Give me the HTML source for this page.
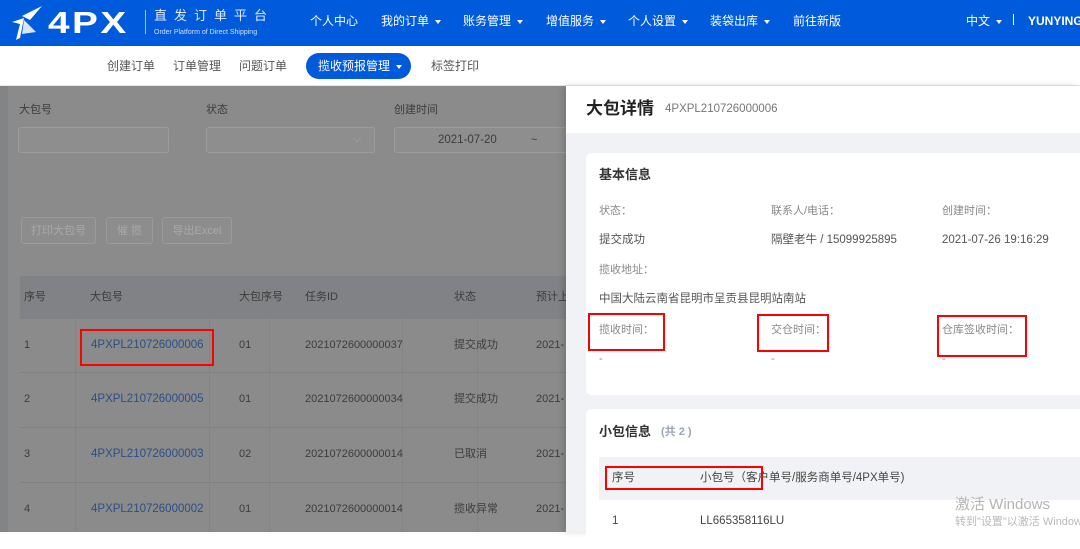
<!DOCTYPE html>
<html><head><meta charset="utf-8"><style>
*{margin:0;padding:0;box-sizing:border-box}
body{width:1080px;height:532px;overflow:hidden;position:relative;font-family:"Liberation Sans","Noto Sans CJK SC",sans-serif;background:#fff;font-size:12px}
.a{position:absolute;white-space:nowrap;line-height:15px}
#top{position:absolute;left:0;top:0;width:1080px;height:46px;background:#005adc;color:#fff}
#top .n{position:absolute;top:14px;font-size:12px;color:#fff;line-height:15px}
.car{display:inline-block;width:0;height:0;border-left:3px solid transparent;border-right:3px solid transparent;border-top:4px solid #fff;vertical-align:middle;margin-left:6px}
#sub{position:absolute;left:0;top:46px;width:1080px;height:40px;background:#fff;border-bottom:1px solid #dde8f5}
#sub .s{position:absolute;top:13px;color:#555;font-size:12px;line-height:15px}
#left{position:absolute;left:0;top:86px;width:566px;height:446px;background:#8b8b8b}
.lt{color:#3c3c3c;font-size:11px}
.inp{position:absolute;border:1px solid #9c9c9c;border-radius:3px;background:#8e8e8e}
.btn{position:absolute;border:1px solid #9a9a9a;border-radius:3px;color:#a9a9a9;font-size:11px;text-align:center;line-height:26px;background:#8d8d8d}
.red{position:absolute;border:2px solid #f00}
#drawer{position:absolute;left:566px;top:86px;width:514px;height:446px;background:#f0f2f5;box-shadow:-3px 0 6px rgba(0,0,0,.15)}
.card{position:absolute;background:#fff;border-radius:6px}
.g{color:#888;font-size:11px}
.v{color:#555;font-size:11.5px}
</style></head><body>
<div id="top">
 <svg class="a" style="left:8px;top:4px" width="36" height="38" viewBox="0 0 36 38"><path d="M4 18 L16 14 L12 34 L8 36 L12 20 Z" fill="#fff"/><path d="M14 12 L34 2 L22 16 Z" fill="#fff"/><path d="M16 16 L28 28 L14 30 Z" fill="#fff" opacity=".85"/></svg>
 <div class="a" style="left:48px;top:7px;font-size:31px;line-height:32px;font-weight:bold;letter-spacing:2px;color:#fff;transform:scaleX(1.25);transform-origin:left">4PX</div>
 <div class="a" style="left:145px;top:10px;width:1px;height:24px;background:#9fc1f2"></div>
 <div class="a" style="left:154px;top:8px;font-size:13px;letter-spacing:7px;color:#dfe9fb">直发订单平台</div>
 <div class="a" style="left:154px;top:25px;font-size:7px;color:#cfe0fa">Order Platform of Direct Shipping</div>
 <div class="n" style="left:310px">个人中心</div>
 <div class="n" style="left:381px">我的订单<span class="car"></span></div>
 <div class="n" style="left:463px">账务管理<span class="car"></span></div>
 <div class="n" style="left:546px">增值服务<span class="car"></span></div>
 <div class="n" style="left:628px">个人设置<span class="car"></span></div>
 <div class="n" style="left:710px">装袋出库<span class="car"></span></div>
 <div class="n" style="left:793px">前往新版</div>
 <div class="n" style="left:966px">中文<span class="car"></span></div>
 <div class="a" style="left:1013px;top:14px;width:1px;height:11px;background:#fff"></div>
 <div class="n" style="left:1028px;font-weight:bold">YUNYING</div>
</div>
<div id="sub">
 <div class="s" style="left:107px">创建订单</div>
 <div class="s" style="left:173px">订单管理</div>
 <div class="s" style="left:239px">问题订单</div>
 <div class="a" style="left:306px;top:7px;width:105px;height:26px;border-radius:13px;background:#005adc;color:#fff;line-height:26px;padding-left:12px;font-size:12px">揽收预报管理<span class="car"></span></div>
 <div class="s" style="left:431px">标签打印</div>
</div>
<div id="left">
 <div class="a" style="left:0;top:0;width:8px;height:446px;background:#838486"></div>
 <div class="a lt" style="left:19px;top:17px">大包号</div>
 <div class="a lt" style="left:206px;top:17px">状态</div>
 <div class="a lt" style="left:394px;top:17px">创建时间</div>
 <div class="inp" style="left:18px;top:41px;width:151px;height:26px"></div>
 <div class="inp" style="left:206px;top:41px;width:169px;height:26px"><span class="a" style="left:146px;top:4px;color:#a8a8a8;font-size:11px">⌵</span></div>
 <div class="inp" style="left:394px;top:41px;width:180px;height:26px"><span class="a lt" style="left:43px;top:5px;font-size:11.5px">2021-07-20</span><span class="a lt" style="left:136px;top:5px">~</span></div>
 <div class="btn" style="left:21px;top:131px;width:75px;height:27px">打印大包号</div>
 <div class="btn" style="left:106px;top:131px;width:47px;height:27px">催 揽</div>
 <div class="btn" style="left:162px;top:131px;width:70px;height:27px">导出Excel</div>
 <div class="a" style="left:20px;top:190px;width:546px;height:43px;background:#818285"></div>
 <div class="a lt" style="left:24px;top:204px">序号</div>
 <div class="a lt" style="left:90px;top:204px">大包号</div>
 <div class="a lt" style="left:239px;top:204px">大包序号</div>
 <div class="a lt" style="left:305px;top:204px">任务ID</div>
 <div class="a lt" style="left:454px;top:204px">状态</div>
 <div class="a lt" style="left:536px;top:204px">预计上</div>
 <div class="a" style="left:20px;top:286px;width:546px;height:1px;background:#808080"></div>
 <div class="a" style="left:20px;top:341px;width:546px;height:1px;background:#808080"></div>
 <div class="a" style="left:20px;top:396px;width:546px;height:1px;background:#808080"></div>
 <div class="a" style="left:75px;top:233px;width:1px;height:213px;background:#848484"></div>
 <div class="a" style="left:209px;top:233px;width:1px;height:213px;background:#848484"></div>
 <div class="a" style="left:269px;top:233px;width:1px;height:213px;background:#848484"></div>
 <div class="a" style="left:402px;top:233px;width:1px;height:213px;background:#848484"></div>
 <div class="a" style="left:477px;top:233px;width:1px;height:213px;background:#848484"></div>
 <div class="a lt" style="left:24px;top:252px">1</div><div class="a" style="left:91px;top:252px;color:#2a4f86;font-size:11.5px">4PXPL210726000006</div><div class="a lt" style="left:239px;top:252px">01</div><div class="a lt" style="left:305px;top:252px">2021072600000037</div><div class="a lt" style="left:454px;top:252px">提交成功</div><div class="a lt" style="left:536px;top:252px">2021-</div>
 <div class="a lt" style="left:24px;top:306px">2</div><div class="a" style="left:91px;top:306px;color:#2a4f86;font-size:11.5px">4PXPL210726000005</div><div class="a lt" style="left:239px;top:306px">01</div><div class="a lt" style="left:305px;top:306px">2021072600000034</div><div class="a lt" style="left:454px;top:306px">提交成功</div><div class="a lt" style="left:536px;top:306px">2021-</div>
 <div class="a lt" style="left:24px;top:361px">3</div><div class="a" style="left:91px;top:361px;color:#2a4f86;font-size:11.5px">4PXPL210726000003</div><div class="a lt" style="left:239px;top:361px">02</div><div class="a lt" style="left:305px;top:361px">2021072600000014</div><div class="a lt" style="left:454px;top:361px">已取消</div><div class="a lt" style="left:536px;top:361px">2021-</div>
 <div class="a lt" style="left:24px;top:416px">4</div><div class="a" style="left:91px;top:416px;color:#2a4f86;font-size:11.5px">4PXPL210726000002</div><div class="a lt" style="left:239px;top:416px">01</div><div class="a lt" style="left:305px;top:416px">2021072600000014</div><div class="a lt" style="left:454px;top:416px">揽收异常</div><div class="a lt" style="left:536px;top:416px">2021-</div>
</div>
<div class="red" style="left:80px;top:329px;width:134px;height:37px"></div>
<div id="drawer">
 <div class="a" style="left:0;top:0;width:514px;height:47px;background:#fff"></div>
 <div class="a" style="left:20px;top:13px;font-size:17px;line-height:20px;font-weight:bold;color:#222">大包详情</div>
 <div class="a" style="left:99px;top:16px;font-size:11.5px;color:#777">4PXPL210726000006</div>
 <div class="card" style="left:20px;top:67px;width:500px;height:242px"></div>
 <div class="card" style="left:20px;top:323px;width:500px;height:140px"></div>
</div>
<div class="a" style="left:599px;top:167px;font-size:13px;font-weight:bold;color:#333">基本信息</div>
<div class="a g" style="left:599px;top:204px">状态：</div>
<div class="a g" style="left:771px;top:204px">联系人/电话：</div>
<div class="a g" style="left:942px;top:204px">创建时间：</div>
<div class="a v" style="left:599px;top:233px">提交成功</div>
<div class="a v" style="left:771px;top:233px">隔壁老牛 / 15099925895</div>
<div class="a v" style="left:942px;top:233px">2021-07-26 19:16:29</div>
<div class="a g" style="left:599px;top:263px">揽收地址：</div>
<div class="a v" style="left:599px;top:292px">中国大陆云南省昆明市呈贡县昆明站南站</div>
<div class="a g" style="left:599px;top:323px">揽收时间：</div>
<div class="a g" style="left:771px;top:323px">交仓时间：</div>
<div class="a g" style="left:942px;top:323px">仓库签收时间：</div>
<div class="a g" style="left:599px;top:352px">-</div><div class="a g" style="left:771px;top:352px">-</div><div class="a g" style="left:942px;top:352px">-</div>
<div class="red" style="left:588px;top:313px;width:77px;height:38px"></div>
<div class="red" style="left:757px;top:314px;width:72px;height:38px"></div>
<div class="red" style="left:937px;top:315px;width:90px;height:42px"></div>
<div class="a" style="left:599px;top:424px;font-size:13px;font-weight:bold;color:#333">小包信息</div>
<div class="a" style="left:661px;top:425px;font-size:11px;font-weight:bold;color:#9aa3b5">(共 2 )</div>
<div class="a" style="left:599px;top:457px;width:481px;height:43px;background:#f0f2f5"></div>
<div class="a v" style="left:612px;top:471px;color:#444">序号</div>
<div class="a v" style="left:700px;top:471px;color:#444">小包号（客户单号/服务商单号/4PX单号)</div>
<div class="red" style="left:605px;top:466px;width:158px;height:24px"></div>
<div class="a v" style="left:612px;top:514px;color:#444">1</div>
<div class="a v" style="left:700px;top:514px;color:#444">LL665358116LU</div>
<div class="a" style="left:955px;top:496px;font-size:15px;line-height:18px;color:#b4b4b4">激活 Windows</div>
<div class="a" style="left:955px;top:515px;font-size:11px;color:#bababa">转到"设置"以激活 Windows</div>
</body></html>
